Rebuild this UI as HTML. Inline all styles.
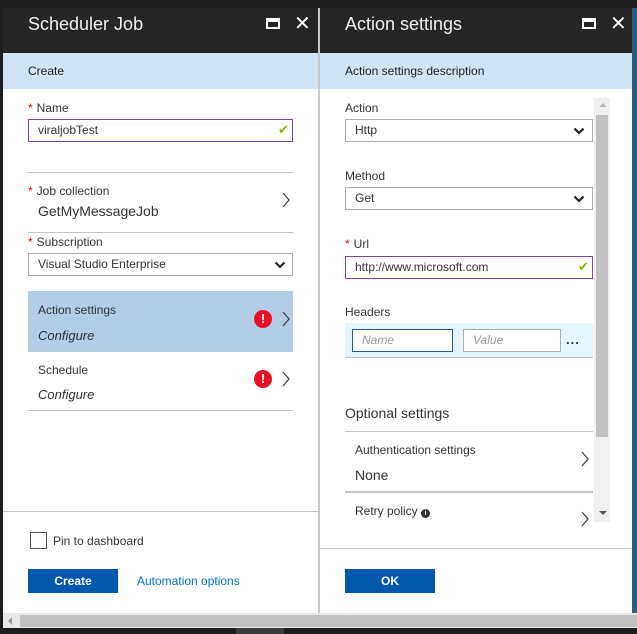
<!DOCTYPE html>
<html><head><meta charset="utf-8"><style>
*{margin:0;padding:0;box-sizing:border-box}
body{width:637px;height:634px;overflow:hidden;background:#1e1e1e;font-family:"Liberation Sans",sans-serif;position:relative;color:#333}
.a{position:absolute}
.hdr{background:#252525;color:#f0f0f0;font-size:18px;top:8px;height:45px}
.sub{background:#cfe4f5;top:53px;height:36px;font-size:12px;color:#222;line-height:36px}
.lbl{font-size:12px;color:#333}
.star{color:#e00;margin-right:4px}
.inp{border:1px solid #adadad;background:#fff;font-size:12px;line-height:20px;padding-left:9px}
.line{height:1px;background:#c4c4c4}
.chk{color:#7fba00;font-size:13px}
.err{width:18px;height:18px;border-radius:50%;background:#e81123;color:#fff;font-weight:bold;font-size:13px;text-align:center;line-height:18px}
.btn{background:#0058ad;color:#fff;font-weight:bold;font-size:12px;text-align:center;line-height:24px}
</style></head><body>
<svg width="0" height="0" style="position:absolute"><defs>
<symbol id="ch" viewBox="0 0 8 16"><path d="M1 1 L7 8 L1 15" fill="none" stroke="#444" stroke-width="1.3"/></symbol>
<symbol id="dd" viewBox="0 0 12 8"><path d="M1.5 1.5 L6 6 L10.5 1.5" fill="none" stroke="#222" stroke-width="2.2"/></symbol>
</defs></svg>
<!-- left panel -->
<div class="a" style="left:3px;top:8px;width:315px;height:605px;background:#fff"></div>
<div class="a hdr" style="left:3px;width:315px;padding-left:25px;line-height:32px">Scheduler Job</div>
<div class="a" style="left:266px;top:18px;width:14px;height:11px;border:2px solid #fff;border-top-width:4px"></div>
<div class="a" style="left:294px;top:11px;color:#fff;font-size:20px">✕</div>
<div class="a sub" style="left:3px;width:315px;padding-left:25px">Create</div>
<div class="a lbl" style="left:28px;top:101px"><span class="star">*</span>Name</div>
<div class="a inp" style="left:28px;top:119px;width:265px;height:23px;border-color:#8a3ea0">viraljobTest</div>
<div class="a chk" style="left:278px;top:122px">✔</div>
<div class="a line" style="left:28px;top:172px;width:265px"></div>
<div class="a lbl" style="left:28px;top:184px"><span class="star">*</span>Job collection</div>
<div class="a" style="left:38px;top:203px;font-size:14px;color:#333">GetMyMessageJob</div>
<svg class="a" style="left:282px;top:192px" width="8" height="16"><use href="#ch"/></svg>
<div class="a line" style="left:28px;top:232px;width:265px"></div>
<div class="a lbl" style="left:28px;top:235px"><span class="star">*</span>Subscription</div>
<div class="a inp" style="left:28px;top:253px;width:265px;height:23px">Visual Studio Enterprise</div>
<svg class="a" style="left:274px;top:261px" width="12" height="8"><use href="#dd"/></svg>
<div class="a" style="left:28px;top:291px;width:265px;height:61px;background:#b3cde6"></div>
<div class="a lbl" style="left:38px;top:303px">Action settings</div>
<div class="a" style="left:38px;top:328px;font-size:13px;font-style:italic;color:#333">Configure</div>
<div class="a err" style="left:254px;top:310px">!</div>
<svg class="a" style="left:282px;top:311px" width="8" height="16"><use href="#ch"/></svg>
<div class="a lbl" style="left:38px;top:363px">Schedule</div>
<div class="a" style="left:38px;top:387px;font-size:13px;font-style:italic;color:#333">Configure</div>
<div class="a err" style="left:254px;top:370px">!</div>
<svg class="a" style="left:282px;top:371px" width="8" height="16"><use href="#ch"/></svg>
<div class="a line" style="left:28px;top:410px;width:265px"></div>
<div class="a line" style="left:3px;top:511px;width:315px"></div>
<div class="a" style="left:30px;top:532px;width:17px;height:17px;border:1px solid #555"></div>
<div class="a lbl" style="left:53px;top:534px">Pin to dashboard</div>
<div class="a btn" style="left:28px;top:569px;width:90px">Create</div>
<div class="a" style="left:137px;top:574px;font-size:12px;color:#0072c6">Automation options</div>
<div class="a" style="left:318px;top:8px;width:2px;height:605px;background:#c8c8c8"></div>
<!-- right panel -->
<div class="a" style="left:320px;top:8px;width:312px;height:605px;background:#fff"></div>
<div class="a hdr" style="left:320px;width:312px;padding-left:25px;line-height:32px">Action settings</div>
<div class="a" style="left:582px;top:18px;width:14px;height:11px;border:2px solid #fff;border-top-width:4px"></div>
<div class="a" style="left:610px;top:11px;color:#fff;font-size:20px">✕</div>
<div class="a sub" style="left:320px;width:312px;padding-left:25px">Action settings description</div>
<div class="a lbl" style="left:345px;top:101px">Action</div>
<div class="a inp" style="left:345px;top:119px;width:248px;height:23px">Http</div>
<svg class="a" style="left:573px;top:127px" width="12" height="8"><use href="#dd"/></svg>
<div class="a lbl" style="left:345px;top:169px">Method</div>
<div class="a inp" style="left:345px;top:187px;width:248px;height:23px">Get</div>
<svg class="a" style="left:573px;top:195px" width="12" height="8"><use href="#dd"/></svg>
<div class="a lbl" style="left:345px;top:237px"><span class="star">*</span>Url</div>
<div class="a inp" style="left:345px;top:256px;width:248px;height:23px;border-color:#8a3ea0">http://www.microsoft.com</div>
<div class="a chk" style="left:578px;top:259px">✔</div>
<div class="a lbl" style="left:345px;top:305px">Headers</div>
<div class="a" style="left:345px;top:323px;width:248px;height:35px;background:#e5f5fc;border-bottom:1px solid #c4c4c4"></div>
<div class="a inp" style="left:352px;top:329px;width:101px;height:23px;border:1px solid #1f5fa6;font-style:italic;color:#999">Name</div>
<div class="a inp" style="left:463px;top:329px;width:98px;height:23px;font-style:italic;color:#999">Value</div>
<div class="a" style="left:566px;top:332px;font-size:13px;font-weight:bold;color:#333;letter-spacing:1px">...</div>
<div class="a" style="left:345px;top:405px;font-size:14px;color:#333">Optional settings</div>
<div class="a line" style="left:345px;top:431px;width:248px"></div>
<div class="a lbl" style="left:355px;top:443px">Authentication settings</div>
<div class="a" style="left:355px;top:467px;font-size:14px">None</div>
<svg class="a" style="left:581px;top:451px" width="8" height="16"><use href="#ch"/></svg>
<div class="a" style="left:345px;top:491px;width:248px;height:2px;background:#c4c4c4"></div>
<div class="a lbl" style="left:355px;top:504px">Retry policy <span style="display:inline-block;width:9px;height:9px;border-radius:50%;background:#333;color:#fff;font-size:7px;text-align:center;line-height:9px;font-weight:bold">i</span></div>
<svg class="a" style="left:581px;top:511px" width="8" height="16"><use href="#ch"/></svg>
<div class="a" style="left:594px;top:98px;width:16px;height:424px;background:#f0f0f0"></div>
<div class="a" style="left:596px;top:115px;width:12px;height:322px;background:#c1c1c1"></div>
<div class="a" style="left:599px;top:103px;border:4px solid transparent;border-bottom:4px solid #bbb;border-top:0"></div>
<div class="a" style="left:599px;top:511px;border:4px solid transparent;border-top:4px solid #555;border-bottom:0"></div>
<div class="a line" style="left:320px;top:548px;width:312px"></div>
<div class="a btn" style="left:345px;top:569px;width:90px">OK</div>
<div class="a" style="left:632px;top:8px;width:5px;height:605px;background:#2b5c7c"></div>
<!-- bottom scrollbar -->
<div class="a" style="left:3px;top:613px;width:634px;height:15px;background:#e8e8e8"></div>
<div class="a" style="left:20px;top:615px;width:617px;height:12px;background:#c1c1c1"></div>
<div class="a" style="left:8px;top:617px;border:4px solid transparent;border-right:4px solid #999;border-left:0"></div>
<div class="a" style="left:236px;top:628px;width:48px;height:6px;background:#3a3a3a"></div>
</body></html>
